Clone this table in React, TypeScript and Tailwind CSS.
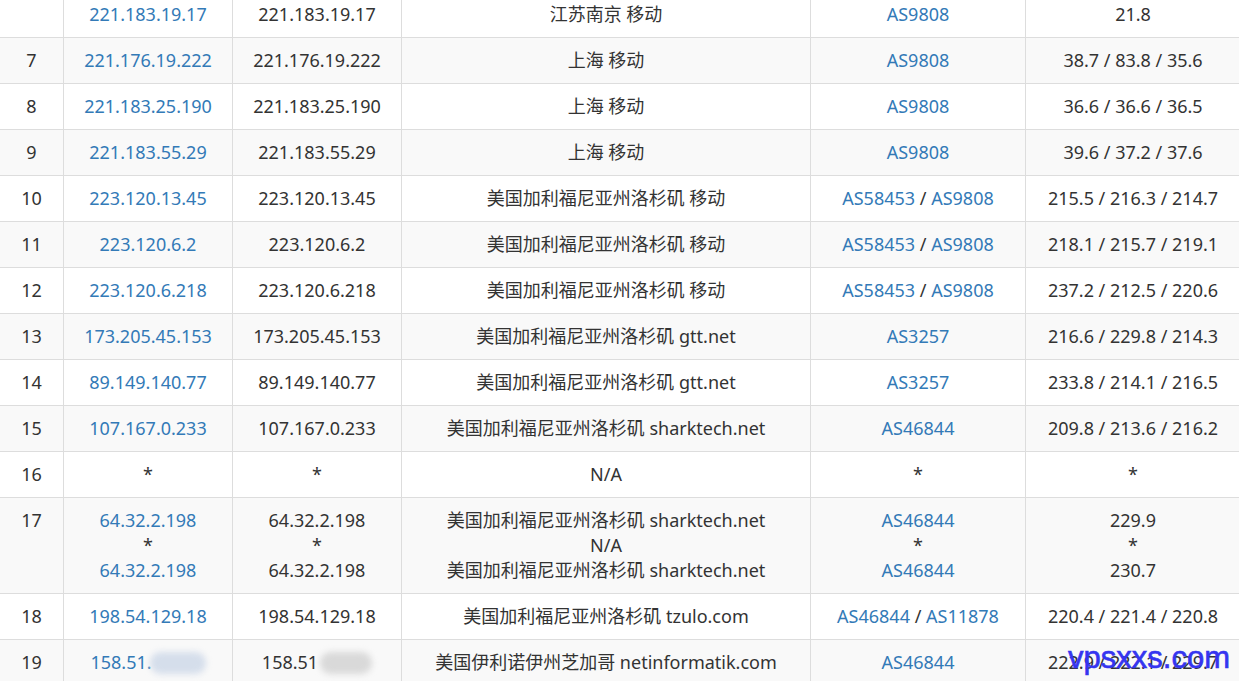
const rows: {
  n: string;
  ip: string[];
  host: string[];
  loc: string[];
  as: string[][];
  ms: string[];
  blur?: boolean;
}[] = [
  { n: "", ip: ["221.183.19.17"], host: ["221.183.19.17"], loc: ["江苏南京 移动"], as: [["AS9808"]], ms: ["21.8"] },
  { n: "7", ip: ["221.176.19.222"], host: ["221.176.19.222"], loc: ["上海 移动"], as: [["AS9808"]], ms: ["38.7 / 83.8 / 35.6"] },
  { n: "8", ip: ["221.183.25.190"], host: ["221.183.25.190"], loc: ["上海 移动"], as: [["AS9808"]], ms: ["36.6 / 36.6 / 36.5"] },
  { n: "9", ip: ["221.183.55.29"], host: ["221.183.55.29"], loc: ["上海 移动"], as: [["AS9808"]], ms: ["39.6 / 37.2 / 37.6"] },
  { n: "10", ip: ["223.120.13.45"], host: ["223.120.13.45"], loc: ["美国加利福尼亚州洛杉矶 移动"], as: [["AS58453", "AS9808"]], ms: ["215.5 / 216.3 / 214.7"] },
  { n: "11", ip: ["223.120.6.2"], host: ["223.120.6.2"], loc: ["美国加利福尼亚州洛杉矶 移动"], as: [["AS58453", "AS9808"]], ms: ["218.1 / 215.7 / 219.1"] },
  { n: "12", ip: ["223.120.6.218"], host: ["223.120.6.218"], loc: ["美国加利福尼亚州洛杉矶 移动"], as: [["AS58453", "AS9808"]], ms: ["237.2 / 212.5 / 220.6"] },
  { n: "13", ip: ["173.205.45.153"], host: ["173.205.45.153"], loc: ["美国加利福尼亚州洛杉矶 gtt.net"], as: [["AS3257"]], ms: ["216.6 / 229.8 / 214.3"] },
  { n: "14", ip: ["89.149.140.77"], host: ["89.149.140.77"], loc: ["美国加利福尼亚州洛杉矶 gtt.net"], as: [["AS3257"]], ms: ["233.8 / 214.1 / 216.5"] },
  { n: "15", ip: ["107.167.0.233"], host: ["107.167.0.233"], loc: ["美国加利福尼亚州洛杉矶 sharktech.net"], as: [["AS46844"]], ms: ["209.8 / 213.6 / 216.2"] },
  { n: "16", ip: ["*"], host: ["*"], loc: ["N/A"], as: [["*"]], ms: ["*"] },
  {
    n: "17",
    ip: ["64.32.2.198", "*", "64.32.2.198"],
    host: ["64.32.2.198", "*", "64.32.2.198"],
    loc: ["美国加利福尼亚州洛杉矶 sharktech.net", "N/A", "美国加利福尼亚州洛杉矶 sharktech.net"],
    as: [["AS46844"], ["*"], ["AS46844"]],
    ms: ["229.9", "*", "230.7"],
  },
  { n: "18", ip: ["198.54.129.18"], host: ["198.54.129.18"], loc: ["美国加利福尼亚州洛杉矶 tzulo.com"], as: [["AS46844", "AS11878"]], ms: ["220.4 / 221.4 / 220.8"] },
  { n: "19", ip: ["158.51."], host: ["158.51"], loc: ["美国伊利诺伊州芝加哥 netinformatik.com"], as: [["AS46844"]], ms: ["222.9 / 222.1 / 229.7"], blur: true },
];

function Lines({ items, blue }: { items: string[]; blue?: boolean }) {
  return (
    <>
      {items.map((t, i) => (
        <div key={i} className={t === "*" ? "text-[#333]" : blue ? "text-[#337ab7]" : "text-[#333]"}>
          {t}
        </div>
      ))}
    </>
  );
}

export default function App() {
  const td = "border border-[#ddd] px-2 py-[10px] text-center align-top";
  return (
    <div
      className="relative h-[681px] w-[1239px] overflow-hidden bg-white text-[18px] leading-[25px] text-[#333]"
      style={{ fontFamily: '"Noto Sans", "Noto Sans CJK SC", sans-serif' }}
    >
      <table className="ml-[-1px] mt-[-9px] w-[1241px] table-fixed border-collapse">
        <colgroup>
          <col className="w-[64px]" />
          <col className="w-[169px]" />
          <col className="w-[169px]" />
          <col className="w-[409px]" />
          <col className="w-[215px]" />
          <col className="w-[215px]" />
        </colgroup>
        <tbody>
          {rows.map((r, i) => (
            <tr key={i} className={i % 2 === 1 ? "bg-[#f9f9f9]" : "bg-white"}>
              <td className={td}>{r.n}</td>
              <td className={td}>
                {r.blur ? (
                  <div className="flex items-center justify-center text-[#337ab7]">
                    <span>{r.ip[0]}</span>
                    <span className="ml-[-2px] h-[22px] w-[56px] rounded-full bg-[#d5deeb] blur-[3px]" />
                  </div>
                ) : (
                  <Lines items={r.ip} blue />
                )}
              </td>
              <td className={td}>
                {r.blur ? (
                  <div className="flex items-center justify-center">
                    <span>{r.host[0]}</span>
                    <span className="ml-[2px] h-[22px] w-[52px] rounded-full bg-[#d9d9d9] blur-[3px]" />
                  </div>
                ) : (
                  <Lines items={r.host} />
                )}
              </td>
              <td className={td}>
                <Lines items={r.loc} />
              </td>
              <td className={td}>
                {r.as.map((g, j) => (
                  <div key={j}>
                    {g.map((a, k) => (
                      <span key={k}>
                        {k > 0 && <span className="text-[#333]"> / </span>}
                        <span className={a === "*" ? "text-[#333]" : "text-[#337ab7]"}>{a}</span>
                      </span>
                    ))}
                  </div>
                ))}
              </td>
              <td className={td}>
                <Lines items={r.ms} />
              </td>
            </tr>
          ))}
        </tbody>
      </table>
      <div
        className="absolute right-[9px] top-[638px] text-[31px] leading-[40px] text-[#3535f0] [-webkit-text-stroke:0.6px_#3535f0]"
        style={{ fontFamily: '"Liberation Sans", sans-serif' }}
      >
        vpsxxs.com
      </div>
    </div>
  );
}
